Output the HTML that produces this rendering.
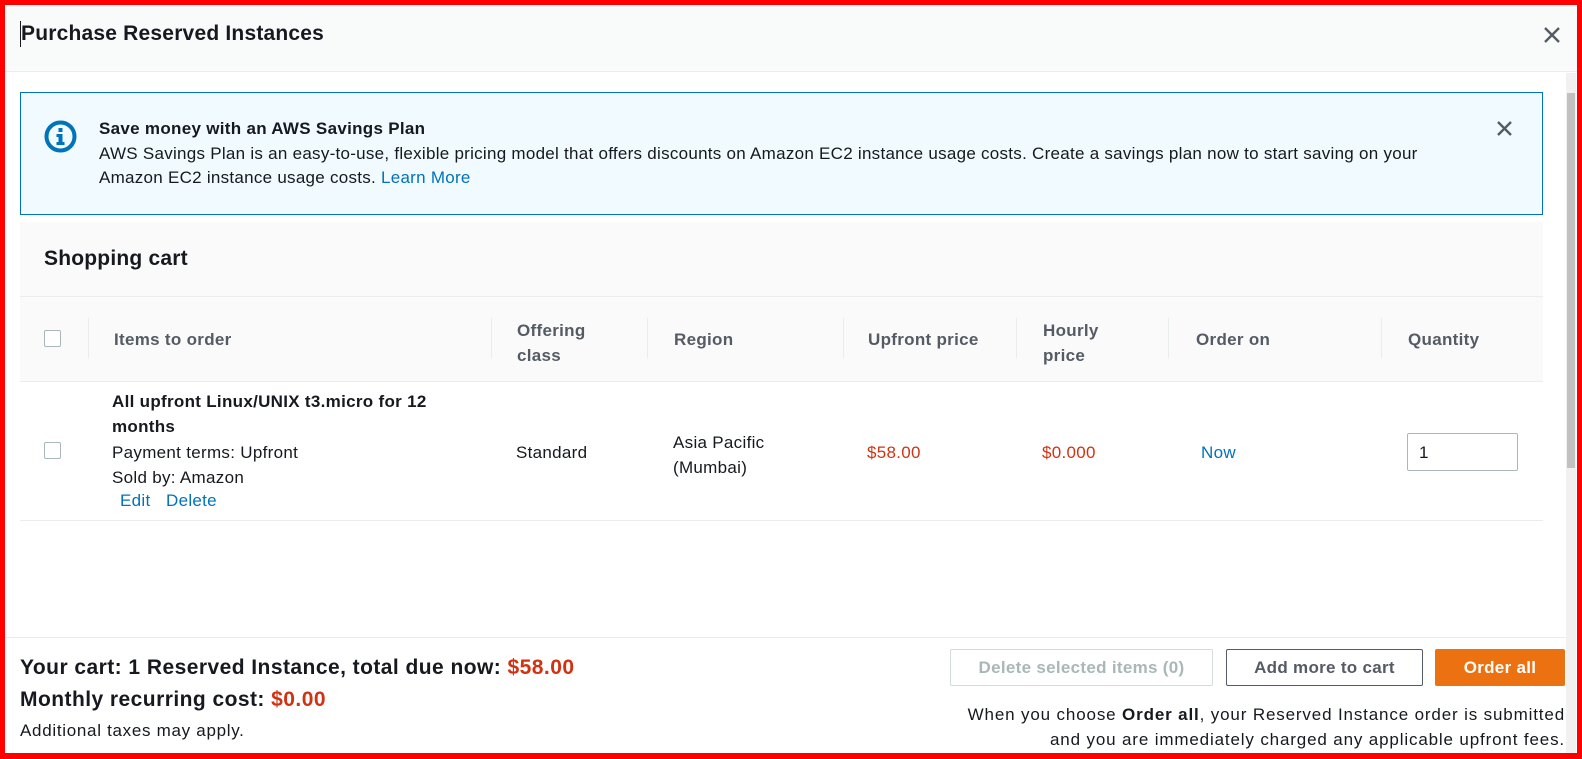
<!DOCTYPE html>
<html><head><meta charset="utf-8"><style>
*{box-sizing:border-box;margin:0;padding:0}
body{width:1582px;height:759px;overflow:hidden;background:#fff;font-family:"Liberation Sans",sans-serif;color:#16191f;font-size:17px;letter-spacing:0.3px;position:relative}
.a{position:absolute;white-space:nowrap}
.b{font-weight:bold}
.hd{color:#545b64;font-weight:bold}
.red{color:#d13212}
.blue{color:#0073bb}
.sep{position:absolute;width:1px;background:#eaeded;top:318px;height:40px}
.cb{position:absolute;width:17px;height:17px;border:1px solid #aab7b8;border-radius:2px;background:#fff}
.btn{position:absolute;height:37px;border-radius:2px;font-weight:bold;font-size:17px;display:flex;align-items:center;justify-content:center}
</style></head><body>
<div class="a" style="left:0;top:0;width:1582px;height:5px;background:#f00"></div>
<div class="a" style="left:0;top:0;width:5px;height:759px;background:#f00"></div>
<div class="a" style="left:1577px;top:0;width:5px;height:759px;background:#f00"></div>
<div class="a" style="left:0;top:753px;width:1582px;height:6px;background:#f00"></div>
<div class="a" style="left:5px;top:5px;width:1572px;height:67px;background:#f9fafa;border-bottom:1px solid #eaeded"></div>
<div class="a" style="left:20px;top:21px;width:1px;height:26px;background:#16191f"></div>
<div class="a b" style="left:21px;top:22px;font-size:21px;letter-spacing:0.2px">Purchase Reserved Instances</div>
<svg class="a" style="left:1543px;top:26px" width="18" height="18" viewBox="0 0 18 18"><path d="M2 2L16 16M16 2L2 16" stroke="#545b64" stroke-width="2.4"/></svg>
<div class="a" style="left:1566px;top:73px;width:10px;height:680px;background:#f1f1f1"></div>
<div class="a" style="left:1567px;top:93px;width:8px;height:375px;background:#c1c1c1"></div>
<div class="a" style="left:20px;top:92px;width:1523px;height:123px;background:#f1faff;border:1px solid #0073bb"></div>
<svg class="a" style="left:44px;top:120px" width="33" height="33" viewBox="0 0 33 33"><circle cx="16.5" cy="16.5" r="14" fill="none" stroke="#0073bb" stroke-width="4"/><rect x="14.5" y="8" width="4" height="4" fill="#0073bb"/><path d="M12.5 14H18.5V22H20.5V25H12.5V22H14.5V17H12.5Z" fill="#0073bb"/></svg>
<div class="a b" style="left:99px;top:119px">Save money with an AWS Savings Plan</div>
<div class="a" style="left:99px;top:144px;letter-spacing:0.27px">AWS Savings Plan is an easy-to-use, flexible pricing model that offers discounts on Amazon EC2 instance usage costs. Create a savings plan now to start saving on your</div>
<div class="a" style="left:99px;top:168px;letter-spacing:0.27px">Amazon EC2 instance usage costs. <span class="blue">Learn More</span></div>
<svg class="a" style="left:1496px;top:120px" width="17" height="17" viewBox="0 0 17 17"><path d="M2 2L15 15M15 2L2 15" stroke="#545b64" stroke-width="2.4"/></svg>
<div class="a" style="left:20px;top:222px;width:1523px;height:159px;background:#fafafa"></div>
<div class="a" style="left:20px;top:296px;width:1523px;height:1px;background:#eaeded"></div>
<div class="a" style="left:20px;top:381px;width:1523px;height:1px;background:#eaeded"></div>
<div class="a b" style="left:44px;top:247px;font-size:21px;letter-spacing:0.2px">Shopping cart</div>
<div class="cb" style="left:44px;top:330px"></div>
<div class="sep" style="left:88px"></div><div class="sep" style="left:491px"></div><div class="sep" style="left:647px"></div><div class="sep" style="left:843px"></div><div class="sep" style="left:1016px"></div><div class="sep" style="left:1168px"></div><div class="sep" style="left:1381px"></div>
<div class="a hd" style="left:114px;top:330px">Items to order</div>
<div class="a hd" style="left:517px;top:318px;line-height:25px">Offering<br>class</div>
<div class="a hd" style="left:674px;top:330px">Region</div>
<div class="a hd" style="left:868px;top:330px">Upfront price</div>
<div class="a hd" style="left:1043px;top:318px;line-height:25px">Hourly<br>price</div>
<div class="a hd" style="left:1196px;top:330px">Order on</div>
<div class="a hd" style="left:1408px;top:330px">Quantity</div>
<div class="cb" style="left:44px;top:442px"></div>
<div class="a" style="left:112px;top:389px;line-height:25.3px"><span class="b">All upfront Linux/UNIX t3.micro for 12<br>months</span><br>Payment terms: Upfront<br>Sold by: Amazon</div>
<div class="a blue" style="left:120px;top:491px">Edit</div>
<div class="a blue" style="left:166px;top:491px">Delete</div>
<div class="a" style="left:516px;top:443px">Standard</div>
<div class="a" style="left:673px;top:430px;line-height:25px">Asia Pacific<br>(Mumbai)</div>
<div class="a red" style="left:867px;top:443px">$58.00</div>
<div class="a red" style="left:1042px;top:443px">$0.000</div>
<div class="a blue" style="left:1201px;top:443px">Now</div>
<div class="a" style="left:1407px;top:433px;width:111px;height:38px;border:1px solid #aab7b8;border-radius:2px;padding:9px 0 0 11px">1</div>
<div class="a" style="left:20px;top:520px;width:1523px;height:1px;background:#eaeded"></div>
<div class="a" style="left:5px;top:637px;width:1561px;height:1px;background:#eaeded"></div>
<div class="a b" style="left:20px;top:656px;font-size:21px;letter-spacing:0.45px">Your cart: 1 Reserved Instance, total due now: <span class="red">$58.00</span></div>
<div class="a b" style="left:20px;top:688px;font-size:21px;letter-spacing:0.45px">Monthly recurring cost: <span class="red">$0.00</span></div>
<div class="a" style="left:20px;top:721px;font-size:17px;letter-spacing:0.7px">Additional taxes may apply.</div>
<div class="btn" style="left:950px;top:649px;width:263px;border:1px solid #d5dbdb;color:#aab7b8">Delete selected items (0)</div>
<div class="btn" style="left:1226px;top:649px;width:197px;border:1px solid #545b64;color:#545b64">Add more to cart</div>
<div class="btn" style="left:1435px;top:649px;width:130px;background:#ec7211;color:#fff">Order all</div>
<div class="a" style="right:17px;top:702px;text-align:right;line-height:25px;letter-spacing:0.85px">When you choose <b>Order all</b>, your Reserved Instance order is submitted<br>and you are immediately charged any applicable upfront fees.</div>
</body></html>
